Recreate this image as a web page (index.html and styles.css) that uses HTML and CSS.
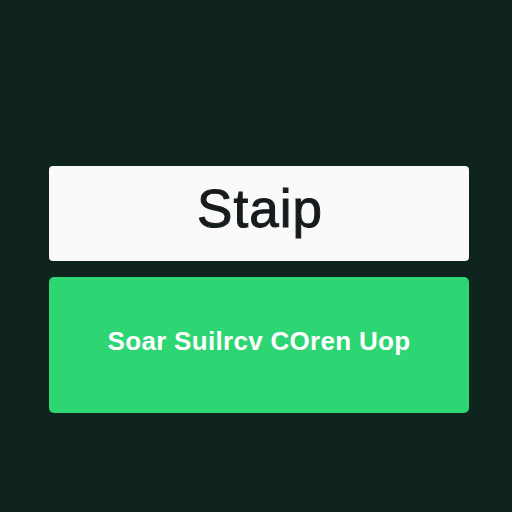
FILE: index.html
```html
<!DOCTYPE html>
<html>
<head>
<meta charset="utf-8">
<link rel="stylesheet" href="styles.css">
</head>
<body>
<main class="screen">
  <div class="panel">
    <div class="title-box">Staip</div>
    <button class="cta">Soar Suilrcv COren Uop</button>
  </div>
</main>
</body>
</html>
```
FILE: styles.css
```css
html, body {
  margin: 0;
  padding: 0;
  background: #0f231f;
}
.screen {
  width: 512px;
  height: 512px;
  box-sizing: border-box;
  padding: 166px 43px 0 49px;
  font-family: "Liberation Sans", Arial, sans-serif;
}
.panel {
  display: flex;
  flex-direction: column;
  gap: 16px;
  width: 420px;
}
.title-box {
  height: 95px;
  background: #fafafa;
  border-radius: 4px;
  display: flex;
  align-items: center;
  justify-content: center;
  box-sizing: border-box;
  padding-bottom: 10px;
  padding-left: 2px;
  color: #161b1e;
  font-size: 53px;
  letter-spacing: 1px;
  -webkit-text-stroke: 1px #161b1e;
  line-height: 1;
}
.cta {
  height: 136px;
  background: #2ed573;
  border: none;
  border-radius: 5px;
  color: #ffffff;
  font-family: "Liberation Sans", Arial, sans-serif;
  font-weight: bold;
  font-size: 26px;
  letter-spacing: 0.3px;
  padding: 0 0 8px 0;
  margin: 0;
  display: flex;
  align-items: center;
  justify-content: center;
}
```
